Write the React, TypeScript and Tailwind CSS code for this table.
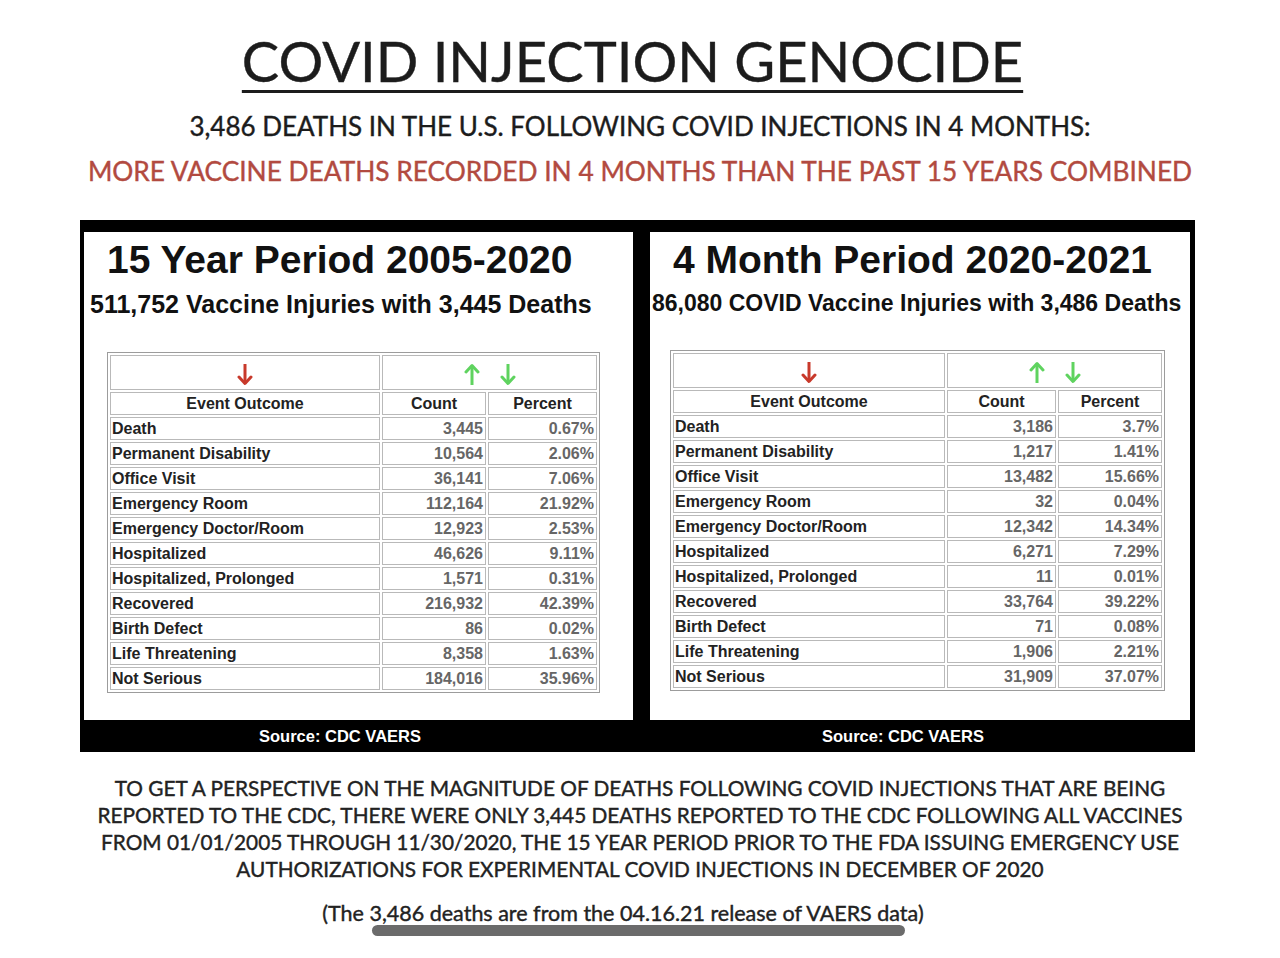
type Row = [string, string, string];

const leftRows: Row[] = [
  ["Death", "3,445", "0.67%"],
  ["Permanent Disability", "10,564", "2.06%"],
  ["Office Visit", "36,141", "7.06%"],
  ["Emergency Room", "112,164", "21.92%"],
  ["Emergency Doctor/Room", "12,923", "2.53%"],
  ["Hospitalized", "46,626", "9.11%"],
  ["Hospitalized, Prolonged", "1,571", "0.31%"],
  ["Recovered", "216,932", "42.39%"],
  ["Birth Defect", "86", "0.02%"],
  ["Life Threatening", "8,358", "1.63%"],
  ["Not Serious", "184,016", "35.96%"],
];

const rightRows: Row[] = [
  ["Death", "3,186", "3.7%"],
  ["Permanent Disability", "1,217", "1.41%"],
  ["Office Visit", "13,482", "15.66%"],
  ["Emergency Room", "32", "0.04%"],
  ["Emergency Doctor/Room", "12,342", "14.34%"],
  ["Hospitalized", "6,271", "7.29%"],
  ["Hospitalized, Prolonged", "11", "0.01%"],
  ["Recovered", "33,764", "39.22%"],
  ["Birth Defect", "71", "0.08%"],
  ["Life Threatening", "1,906", "2.21%"],
  ["Not Serious", "31,909", "37.07%"],
];

function Arrow({ up, color }: { up?: boolean; color: string }) {
  return (
    <svg width="16" height="23" viewBox="0 0 16 23" className={up ? "rotate-180" : ""}>
      <path d="M8 1 V20" stroke={color} strokeWidth="3" fill="none" />
      <path d="M2 14 L8 20.5 L14 14" stroke={color} strokeWidth="3" fill="none" strokeLinecap="round" strokeLinejoin="round" />
    </svg>
  );
}

function DataTable({ rows, cols }: { rows: Row[]; cols: [string, string, string] }) {
  const cell = "border border-[#b9b9b9] p-0 h-[23px] leading-none";
  return (
    <table className="table-fixed border-separate border-spacing-[2px] border border-[#9c9c9c] font-['Liberation_Sans',Arial,sans-serif] text-[16px]">
      <colgroup>
        <col className={cols[0]} />
        <col className={cols[1]} />
        <col className={cols[2]} />
      </colgroup>
      <tbody>
        <tr>
          <td className="border border-[#b9b9b9] h-[35px] p-0">
            <div className="flex justify-center pt-[4px]">
              <Arrow color="#c8392b" />
            </div>
          </td>
          <td colSpan={2} className="border border-[#b9b9b9] h-[35px] p-0">
            <div className="flex justify-center gap-[20px] pt-[4px]">
              <Arrow up color="#5fd35f" />
              <Arrow color="#5fd35f" />
            </div>
          </td>
        </tr>
        <tr className="font-bold text-[#222]">
          <td className={cell + " text-center"}>Event Outcome</td>
          <td className={cell + " text-center"}>Count</td>
          <td className={cell + " text-center"}>Percent</td>
        </tr>
        {rows.map((r) => (
          <tr key={r[0]}>
            <td className={cell + " pl-[1px] font-bold text-[#222]"}>{r[0]}</td>
            <td className={cell + " pr-[2px] text-right text-[#666]"}>{r[1]}</td>
            <td className={cell + " pr-[2px] text-right text-[#666]"}>{r[2]}</td>
          </tr>
        ))}
      </tbody>
    </table>
  );
}

export default function App() {
  return (
    <div className="relative w-[1280px] h-[958px] bg-white overflow-hidden font-['Lato','Open_Sans',sans-serif] text-[#1c1c1c] [-webkit-text-stroke:0.4px_currentColor]">
      <div className="flex flex-col items-center pt-[33px]">
        <h1 className="mr-[15px] text-[56px] leading-none underline decoration-[3px] underline-offset-[8px]">
          COVID INJECTION GENOCIDE
        </h1>
        <div className="mt-[24px] text-[26px] leading-none">
          3,486 DEATHS IN THE U.S. FOLLOWING COVID INJECTIONS IN 4 MONTHS:
        </div>
        <div className="mt-[19px] text-[26.3px] leading-none text-[#b24a40]">
          MORE VACCINE DEATHS RECORDED IN 4 MONTHS THAN THE PAST 15 YEARS COMBINED
        </div>
      </div>

      <div className="ml-[80px] mt-[36px] w-[1115px] bg-black pt-[12px] [-webkit-text-stroke:0px]">
        <div className="flex pl-[4px] pr-[5px] gap-[17px]">
          <section className="w-[549px] h-[488px] bg-white font-['Liberation_Sans',Arial,sans-serif] font-bold text-[#111]">
            <div className="pl-[23px] pt-[8px] text-[39px] leading-none">15 Year Period 2005-2020</div>
            <div className="pl-[6px] mt-[13px] text-[25px] leading-none">511,752 Vaccine Injuries with 3,445 Deaths</div>
            <div className="pl-[23px] mt-[35px]">
              <DataTable rows={leftRows} cols={["w-[270px]", "w-[104px]", "w-[109px]"]} />
            </div>
          </section>
          <section className="w-[540px] h-[488px] bg-white font-['Liberation_Sans',Arial,sans-serif] font-bold text-[#111]">
            <div className="pl-[23px] pt-[8px] text-[39px] leading-none">4 Month Period 2020-2021</div>
            <div className="pl-[2px] mt-[13px] text-[23px] leading-none">86,080 COVID Vaccine Injuries with 3,486 Deaths</div>
            <div className="pl-[20px] mt-[35px]">
              <DataTable rows={rightRows} cols={["w-[272px]", "w-[109px]", "w-[104px]"]} />
            </div>
          </section>
        </div>
        <div className="flex h-[32px] items-center font-['Liberation_Sans',Arial,sans-serif] font-bold text-[16.5px] text-white">
          <div className="w-[520px] text-center">Source: CDC VAERS</div>
          <div className="w-[560px] ml-[23px] text-center">Source: CDC VAERS</div>
        </div>
      </div>

      <div className="mt-[22px] flex flex-col items-center text-[20.8px] leading-[27px] text-[#222]">
        <div>TO GET A PERSPECTIVE ON THE MAGNITUDE OF DEATHS FOLLOWING COVID INJECTIONS THAT ARE BEING</div>
        <div>REPORTED TO THE CDC, THERE WERE ONLY 3,445 DEATHS REPORTED TO THE CDC FOLLOWING ALL VACCINES</div>
        <div>FROM 01/01/2005 THROUGH 11/30/2020, THE 15 YEAR PERIOD PRIOR TO THE FDA ISSUING EMERGENCY USE</div>
        <div>AUTHORIZATIONS FOR EXPERIMENTAL COVID INJECTIONS IN DECEMBER OF 2020</div>
        <div className="mt-[18px] mr-[34px] text-[21.5px]">(The 3,486 deaths are from the 04.16.21 release of VAERS data)</div>
      </div>

      <div className="absolute left-[372px] top-[925px] w-[533px] h-[11px] rounded-full bg-[#6b6b6b]" />
    </div>
  );
}
